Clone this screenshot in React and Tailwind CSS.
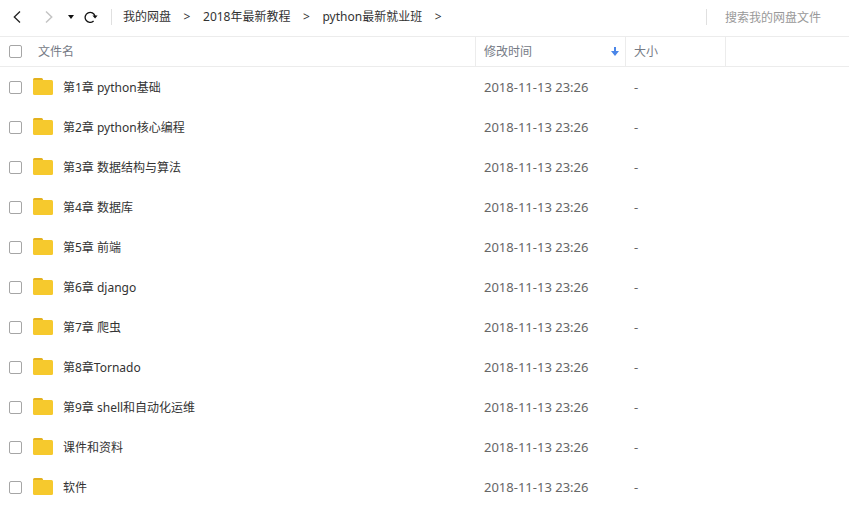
import { useState } from 'react';

const crumbs = ['我的网盘', '2018年最新教程', 'python最新就业班'];

const files = [
  { id: 1, name: '第1章 python基础', time: '2018-11-13 23:26' },
  { id: 2, name: '第2章 python核心编程', time: '2018-11-13 23:26' },
  { id: 3, name: '第3章 数据结构与算法', time: '2018-11-13 23:26' },
  { id: 4, name: '第4章 数据库', time: '2018-11-13 23:26' },
  { id: 5, name: '第5章 前端', time: '2018-11-13 23:26' },
  { id: 6, name: '第6章 django', time: '2018-11-13 23:26' },
  { id: 7, name: '第7章 爬虫', time: '2018-11-13 23:26' },
  { id: 8, name: '第8章Tornado', time: '2018-11-13 23:26' },
  { id: 9, name: '第9章 shell和自动化运维', time: '2018-11-13 23:26' },
  { id: 10, name: '课件和资料', time: '2018-11-13 23:26' },
  { id: 11, name: '软件', time: '2018-11-13 23:26' },
];

function Checkbox({ id, label, checked, onChange }) {
  return (
    <input
      id={id}
      type="checkbox"
      aria-label={label}
      checked={checked}
      onChange={onChange}
      className="w-[13px] h-[13px] shrink-0 appearance-none rounded-xs border border-[#a6a6a6] bg-white checked:border-[#3b8cff] checked:bg-[#3b8cff]"
    />
  );
}

function FolderIcon() {
  return (
    <svg width="20" height="18" viewBox="0 0 20 18" className="shrink-0" aria-hidden="true">
      <path d="M0 4V1.5Q0 0 1.5 0H8.5Q9.4 0 9.8 1L10.5 3V4Z" fill="#e3b11c" />
      <path d="M0 2H18.5Q20 2 20 3.5V15.5Q20 17 18.5 17H1.5Q0 17 0 15.5Z" fill="#f6c92d" />
    </svg>
  );
}

function Toolbar() {
  return (
    <header className="flex items-center h-9 pl-2 pr-3 pb-0.5">
      <nav className="flex items-center" aria-label="导航">
        <button type="button" aria-label="后退" className="w-[18px] h-5 flex items-center justify-center">
          <svg width="8" height="14" viewBox="0 0 8 14" fill="none" stroke="#222" strokeWidth="1.3">
            <path d="M7 1.5L1.3 7L7 12.5" />
          </svg>
        </button>
        <button type="button" aria-label="前进" className="w-[18px] h-5 ml-[14px] flex items-center justify-center">
          <svg width="8" height="14" viewBox="0 0 8 14" fill="none" stroke="#c4c4c4" strokeWidth="1.5">
            <path d="M1 1.5L6.7 7L1 12.5" />
          </svg>
        </button>
        <button type="button" aria-label="历史记录" className="w-4 h-5 ml-[5px] flex items-center justify-center">
          <svg width="6" height="4" viewBox="0 0 6 4" fill="#111">
            <path d="M0 0H6L3 4Z" />
          </svg>
        </button>
        <button type="button" aria-label="刷新" className="w-5 h-5 ml-[2px] flex items-center justify-center">
          <svg width="14" height="12" viewBox="0 0 14 12" fill="none" stroke="#111" strokeWidth="1.3">
            <path d="M9.6 10A5 5 0 1 1 11 5.2" />
            <path d="M8.4 4.6H13.6L11.1 7.4Z" fill="#111" stroke="none" />
          </svg>
        </button>
      </nav>
      <div className="w-px h-4 ml-[10px] bg-[#e0e0e0]" />
      <ol className="flex items-center gap-3 ml-[11px] text-[#333]">
        {crumbs.map((crumb) => (
          <li key={crumb} className="flex items-center gap-3 whitespace-nowrap">
            <a href="#">{crumb}</a>
            <span className="w-2 text-center">&gt;</span>
          </li>
        ))}
      </ol>
      <div className="w-px h-4 ml-auto bg-[#e0e0e0]" />
      <input
        type="search"
        aria-label="搜索我的网盘文件"
        placeholder="搜索我的网盘文件"
        className="w-28 h-6 ml-[18px] outline-none placeholder:text-[#999]"
      />
    </header>
  );
}

export default function App() {
  const [selected, setSelected] = useState([]);

  const toggle = (id) => {
    setSelected((prev) => (prev.includes(id) ? prev.filter((x) => x !== id) : [...prev, id]));
  };

  const toggleAll = () => {
    setSelected((prev) => (prev.length === files.length ? [] : files.map((f) => f.id)));
  };

  return (
    <div className="min-h-screen bg-white text-xs font-['Noto_Sans','Noto_Sans_CJK_SC',sans-serif]">
      <Toolbar />
      <table className="w-full table-fixed border-separate border-spacing-0 text-left">
        <thead className="text-[#757a85]">
          <tr className="h-[31px]">
            <th className="p-0 font-normal border-y border-r border-[#ececec]">
              <div className="flex items-center gap-4 pl-[9px]">
                <Checkbox label="全选" checked={selected.length === files.length} onChange={toggleAll} />
                <span>文件名</span>
              </div>
            </th>
            <th className="w-[150px] p-0 font-normal border-y border-r border-[#ececec]">
              <button type="button" className="w-full flex items-center justify-between pl-2 pr-[6px]">
                修改时间
                <svg width="8" height="9" viewBox="0 0 8 9" fill="#4a86e8" aria-hidden="true">
                  <path d="M3 0H5V4H8L4 9L0 4H3Z" />
                </svg>
              </button>
            </th>
            <th className="w-[100px] p-0 pl-2 font-normal border-y border-r border-[#ececec]">大小</th>
            <td className="w-[123px] p-0 border-y border-[#ececec]" />
          </tr>
        </thead>
        <tbody className="text-[#666]">
          {files.map((file) => (
            <tr key={file.id} className="h-10 hover:bg-[#f5f9ff]">
              <td className="p-0">
                <div className="flex items-center pl-[9px]">
                  <Checkbox
                    id={`file-${file.id}`}
                    checked={selected.includes(file.id)}
                    onChange={() => toggle(file.id)}
                  />
                  <label htmlFor={`file-${file.id}`} className="flex items-center gap-[10px] ml-[11px] text-[#333]">
                    <FolderIcon />
                    <span className="pt-0.5">{file.name}</span>
                  </label>
                </div>
              </td>
              <td className="p-0 pl-2 pt-0.5 text-[13px]">{file.time}</td>
              <td className="p-0 pl-2 pt-0.5 text-[13px]">-</td>
              <td className="p-0" />
            </tr>
          ))}
        </tbody>
      </table>
    </div>
  );
}
